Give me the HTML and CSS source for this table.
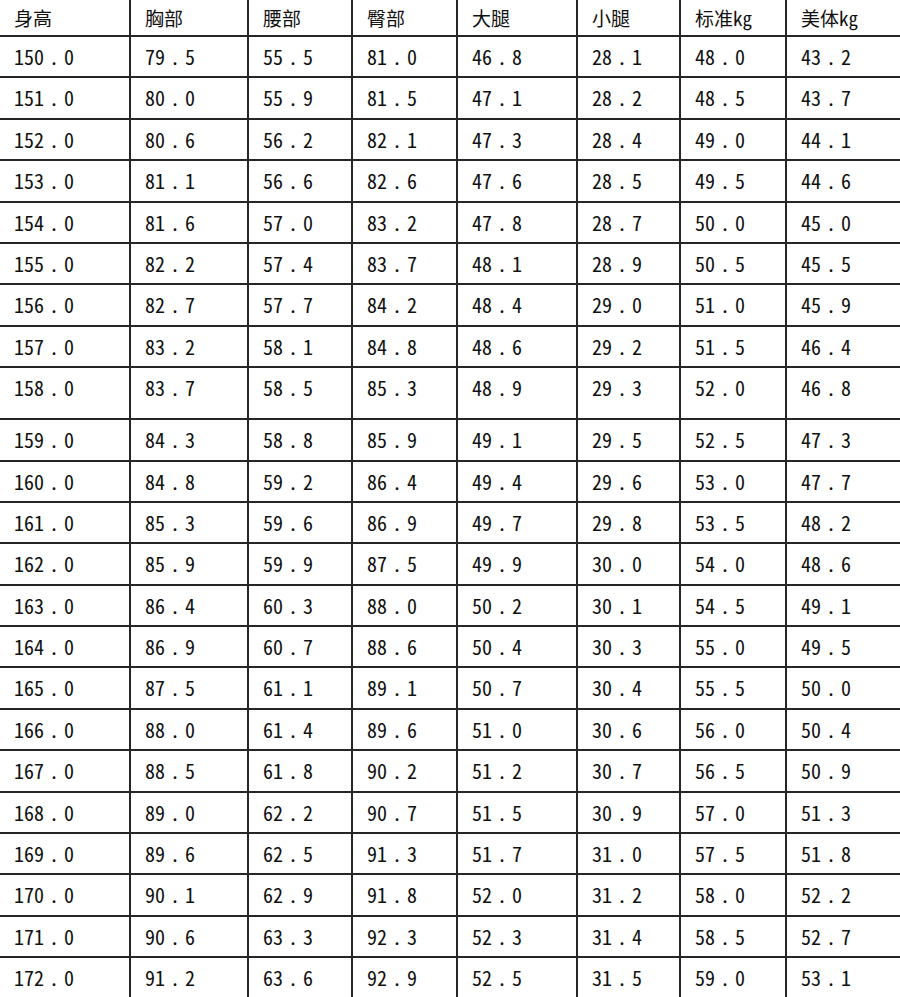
FILE: index.html
```html
<!DOCTYPE html>
<html lang="zh-CN">
<head>
<meta charset="utf-8">
<title>身高体重对照表</title>
<link rel="stylesheet" href="styles.css">
</head>
<body>
<div class="frame">
<table class="sizes">
<colgroup>
<col class="c1"><col class="c2"><col class="c3"><col class="c4"><col class="c5"><col class="c6"><col class="c7"><col class="c8">
</colgroup>
<thead>
<tr class="head"><th>身高</th><th>胸部</th><th>腰部</th><th>臀部</th><th>大腿</th><th>小腿</th><th>标准kg</th><th>美体kg</th></tr>
</thead>
<tbody>
<tr><td>150<i>.</i>0</td><td>79<i>.</i>5</td><td>55<i>.</i>5</td><td>81<i>.</i>0</td><td>46<i>.</i>8</td><td>28<i>.</i>1</td><td>48<i>.</i>0</td><td>43<i>.</i>2</td></tr>
<tr><td>151<i>.</i>0</td><td>80<i>.</i>0</td><td>55<i>.</i>9</td><td>81<i>.</i>5</td><td>47<i>.</i>1</td><td>28<i>.</i>2</td><td>48<i>.</i>5</td><td>43<i>.</i>7</td></tr>
<tr><td>152<i>.</i>0</td><td>80<i>.</i>6</td><td>56<i>.</i>2</td><td>82<i>.</i>1</td><td>47<i>.</i>3</td><td>28<i>.</i>4</td><td>49<i>.</i>0</td><td>44<i>.</i>1</td></tr>
<tr><td>153<i>.</i>0</td><td>81<i>.</i>1</td><td>56<i>.</i>6</td><td>82<i>.</i>6</td><td>47<i>.</i>6</td><td>28<i>.</i>5</td><td>49<i>.</i>5</td><td>44<i>.</i>6</td></tr>
<tr><td>154<i>.</i>0</td><td>81<i>.</i>6</td><td>57<i>.</i>0</td><td>83<i>.</i>2</td><td>47<i>.</i>8</td><td>28<i>.</i>7</td><td>50<i>.</i>0</td><td>45<i>.</i>0</td></tr>
<tr><td>155<i>.</i>0</td><td>82<i>.</i>2</td><td>57<i>.</i>4</td><td>83<i>.</i>7</td><td>48<i>.</i>1</td><td>28<i>.</i>9</td><td>50<i>.</i>5</td><td>45<i>.</i>5</td></tr>
<tr><td>156<i>.</i>0</td><td>82<i>.</i>7</td><td>57<i>.</i>7</td><td>84<i>.</i>2</td><td>48<i>.</i>4</td><td>29<i>.</i>0</td><td>51<i>.</i>0</td><td>45<i>.</i>9</td></tr>
<tr><td>157<i>.</i>0</td><td>83<i>.</i>2</td><td>58<i>.</i>1</td><td>84<i>.</i>8</td><td>48<i>.</i>6</td><td>29<i>.</i>2</td><td>51<i>.</i>5</td><td>46<i>.</i>4</td></tr>
<tr class="tall"><td>158<i>.</i>0</td><td>83<i>.</i>7</td><td>58<i>.</i>5</td><td>85<i>.</i>3</td><td>48<i>.</i>9</td><td>29<i>.</i>3</td><td>52<i>.</i>0</td><td>46<i>.</i>8</td></tr>
<tr><td>159<i>.</i>0</td><td>84<i>.</i>3</td><td>58<i>.</i>8</td><td>85<i>.</i>9</td><td>49<i>.</i>1</td><td>29<i>.</i>5</td><td>52<i>.</i>5</td><td>47<i>.</i>3</td></tr>
<tr><td>160<i>.</i>0</td><td>84<i>.</i>8</td><td>59<i>.</i>2</td><td>86<i>.</i>4</td><td>49<i>.</i>4</td><td>29<i>.</i>6</td><td>53<i>.</i>0</td><td>47<i>.</i>7</td></tr>
<tr><td>161<i>.</i>0</td><td>85<i>.</i>3</td><td>59<i>.</i>6</td><td>86<i>.</i>9</td><td>49<i>.</i>7</td><td>29<i>.</i>8</td><td>53<i>.</i>5</td><td>48<i>.</i>2</td></tr>
<tr><td>162<i>.</i>0</td><td>85<i>.</i>9</td><td>59<i>.</i>9</td><td>87<i>.</i>5</td><td>49<i>.</i>9</td><td>30<i>.</i>0</td><td>54<i>.</i>0</td><td>48<i>.</i>6</td></tr>
<tr><td>163<i>.</i>0</td><td>86<i>.</i>4</td><td>60<i>.</i>3</td><td>88<i>.</i>0</td><td>50<i>.</i>2</td><td>30<i>.</i>1</td><td>54<i>.</i>5</td><td>49<i>.</i>1</td></tr>
<tr><td>164<i>.</i>0</td><td>86<i>.</i>9</td><td>60<i>.</i>7</td><td>88<i>.</i>6</td><td>50<i>.</i>4</td><td>30<i>.</i>3</td><td>55<i>.</i>0</td><td>49<i>.</i>5</td></tr>
<tr><td>165<i>.</i>0</td><td>87<i>.</i>5</td><td>61<i>.</i>1</td><td>89<i>.</i>1</td><td>50<i>.</i>7</td><td>30<i>.</i>4</td><td>55<i>.</i>5</td><td>50<i>.</i>0</td></tr>
<tr><td>166<i>.</i>0</td><td>88<i>.</i>0</td><td>61<i>.</i>4</td><td>89<i>.</i>6</td><td>51<i>.</i>0</td><td>30<i>.</i>6</td><td>56<i>.</i>0</td><td>50<i>.</i>4</td></tr>
<tr><td>167<i>.</i>0</td><td>88<i>.</i>5</td><td>61<i>.</i>8</td><td>90<i>.</i>2</td><td>51<i>.</i>2</td><td>30<i>.</i>7</td><td>56<i>.</i>5</td><td>50<i>.</i>9</td></tr>
<tr><td>168<i>.</i>0</td><td>89<i>.</i>0</td><td>62<i>.</i>2</td><td>90<i>.</i>7</td><td>51<i>.</i>5</td><td>30<i>.</i>9</td><td>57<i>.</i>0</td><td>51<i>.</i>3</td></tr>
<tr><td>169<i>.</i>0</td><td>89<i>.</i>6</td><td>62<i>.</i>5</td><td>91<i>.</i>3</td><td>51<i>.</i>7</td><td>31<i>.</i>0</td><td>57<i>.</i>5</td><td>51<i>.</i>8</td></tr>
<tr><td>170<i>.</i>0</td><td>90<i>.</i>1</td><td>62<i>.</i>9</td><td>91<i>.</i>8</td><td>52<i>.</i>0</td><td>31<i>.</i>2</td><td>58<i>.</i>0</td><td>52<i>.</i>2</td></tr>
<tr><td>171<i>.</i>0</td><td>90<i>.</i>6</td><td>63<i>.</i>3</td><td>92<i>.</i>3</td><td>52<i>.</i>3</td><td>31<i>.</i>4</td><td>58<i>.</i>5</td><td>52<i>.</i>7</td></tr>
<tr><td>172<i>.</i>0</td><td>91<i>.</i>2</td><td>63<i>.</i>6</td><td>92<i>.</i>9</td><td>52<i>.</i>5</td><td>31<i>.</i>5</td><td>59<i>.</i>0</td><td>53<i>.</i>1</td></tr>
</tbody>
</table>
</div>
</body>
</html>
```
FILE: styles.css
```css
html, body {
  margin: 0;
  padding: 0;
  background: #ffffff;
}
body {
  overflow: hidden;
}
.frame {
  width: 900px;
  height: 997px;
  overflow: hidden;
}
.sizes {
  table-layout: fixed;
  border-collapse: separate;
  border-spacing: 0;
  width: 900px;
  font-family: "Noto Sans Mono CJK SC", "Noto Sans CJK SC", "DejaVu Sans Mono", monospace;
  font-size: 19px;
  color: #111111;
}
.c1 { width: 131px; }
.c2 { width: 118px; }
.c3 { width: 104px; }
.c4 { width: 105px; }
.c5 { width: 120px; }
.c6 { width: 103px; }
.c7 { width: 106px; }
.c8 { width: 113px; }
.sizes th,
.sizes td {
  box-sizing: border-box;
  padding: 0 0 0 14px;
  text-align: left;
  vertical-align: top;
  font-weight: normal;
  white-space: nowrap;
  border-right: 2px solid #262626;
  border-bottom: 2px solid #262626;
  line-height: 39px;
}
.sizes td {
  font-size: 20px;
}
.sizes td i {
  font-style: normal;
  display: inline-block;
  width: 1em;
  text-align: center;
}
.sizes th:last-child,
.sizes td:last-child {
  border-right: none;
}
.head {
  height: 37px;
}
.head th {
  line-height: 35px;
}
.sizes tbody tr {
  height: 41.4px;
}
.sizes tbody tr.tall {
  height: 52px;
}
```
